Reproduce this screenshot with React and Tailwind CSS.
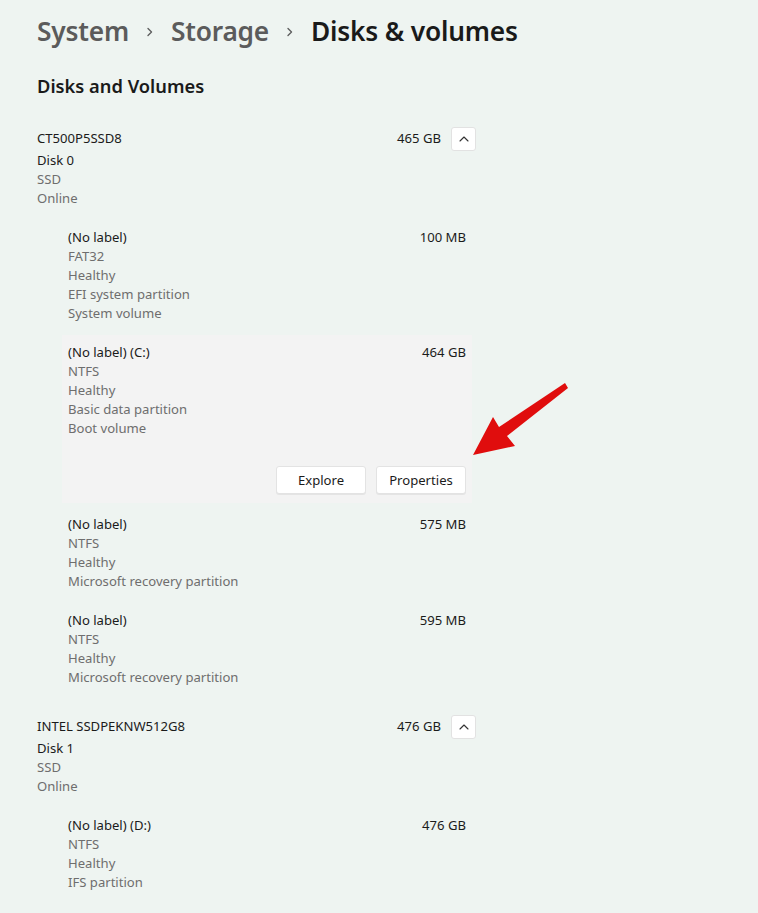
import React from "react";

const disks = [
  {
    name: "CT500P5SSD8",
    size: "465 GB",
    index: "Disk 0",
    type: "SSD",
    status: "Online",
    volumes: [
      { label: "(No label)", size: "100 MB", lines: ["FAT32", "Healthy", "EFI system partition", "System volume"] },
      { label: "(No label) (C:)", size: "464 GB", lines: ["NTFS", "Healthy", "Basic data partition", "Boot volume"], selected: true },
      { label: "(No label)", size: "575 MB", lines: ["NTFS", "Healthy", "Microsoft recovery partition"] },
      { label: "(No label)", size: "595 MB", lines: ["NTFS", "Healthy", "Microsoft recovery partition"] },
    ],
  },
  {
    name: "INTEL SSDPEKNW512G8",
    size: "476 GB",
    index: "Disk 1",
    type: "SSD",
    status: "Online",
    volumes: [
      { label: "(No label) (D:)", size: "476 GB", lines: ["NTFS", "Healthy", "IFS partition"] },
    ],
  },
];

const Chevron = () => (
  <svg width="8" height="12" viewBox="0 0 8 12" className="mx-[17px] mt-[2px]">
    <path d="M2 2.5 L5.5 6 L2 9.5" fill="none" stroke="#5f5f5f" strokeWidth="1.4" strokeLinecap="round" strokeLinejoin="round" />
  </svg>
);

const Volume = ({ v }) => {
  if (v.selected) {
    return (
      <div className="mt-[12px] bg-[#f3f3f3] px-[6px] pt-[8px] pb-[9px]">
        <div className="flex justify-between text-[#1b1b1b]">
          <span>{v.label}</span>
          <span>{v.size}</span>
        </div>
        {v.lines.map((l) => (
          <div key={l} className="text-[#6e6e6e]">{l}</div>
        ))}
        <div className="mt-[28px] flex justify-end gap-[10px]">
          <button className="h-[28px] w-[90px] rounded-[3px] border border-[#e3e3e3] bg-white text-[#1b1b1b] shadow-[0_1px_0_rgba(0,0,0,0.06)]">
            Explore
          </button>
          <button className="h-[28px] w-[90px] rounded-[3px] border border-[#e3e3e3] bg-white text-[#1b1b1b] shadow-[0_1px_0_rgba(0,0,0,0.06)]">
            Properties
          </button>
        </div>
      </div>
    );
  }
  return (
    <div className="px-[6px] pt-[12px] first:pt-0 [&+&]:pt-[20px]">
      <div className="flex justify-between text-[#1b1b1b]">
        <span>{v.label}</span>
        <span>{v.size}</span>
      </div>
      {v.lines.map((l) => (
        <div key={l} className="text-[#6e6e6e]">{l}</div>
      ))}
    </div>
  );
};

const Disk = ({ d }) => (
  <div>
    <div className="flex w-[439px] items-start">
      <span className="flex-1 leading-[21px] text-[#1b1b1b]">{d.name}</span>
      <span className="leading-[21px] text-[#1b1b1b]">{d.size}</span>
      <button className="ml-[10px] -mt-[1px] flex h-[24px] w-[25px] items-center justify-center rounded-[3px] border border-[#e2e2e2] bg-white">
        <svg width="10" height="6" viewBox="0 0 10 6">
          <path d="M1 5 L5 1 L9 5" fill="none" stroke="#333" strokeWidth="1.1" strokeLinecap="round" strokeLinejoin="round" />
        </svg>
      </button>
    </div>
    <div className="text-[#1b1b1b]">{d.index}</div>
    <div className="text-[#6e6e6e]">{d.type}</div>
    <div className="text-[#6e6e6e]">{d.status}</div>
    <div className="ml-[25px] mt-[20px] flex w-[410px] flex-col">
      {d.volumes.map((v, i) => (
        <Volume key={i} v={v} />
      ))}
    </div>
  </div>
);

export default function App() {
  return (
    <div
      className="relative min-h-[913px] w-[758px] bg-[#eef4f1] pl-[37px] pt-[10px] text-[13.1px] leading-[19px]"
      style={{ fontFamily: '"Noto Sans", "Open Sans", sans-serif' }}
    >
      <div className="flex h-[42px] items-center text-[26.3px] font-semibold tracking-[-0.2px]">
        <span className="text-[#5b5b5b]">System</span>
        <Chevron />
        <span className="text-[#5b5b5b]">Storage</span>
        <Chevron />
        <span className="text-[#1a1a1a]">Disks &amp; volumes</span>
      </div>
      <h2 className="mt-[21px] text-[18.3px] font-semibold leading-[26px] text-[#1a1a1a]">Disks and Volumes</h2>
      <div className="mt-[29px] flex flex-col gap-[29px]">
        {disks.map((d) => (
          <Disk key={d.name} d={d} />
        ))}
      </div>

      {/* red pointer arrow */}
      <svg className="pointer-events-none absolute left-0 top-0" width="758" height="913">
        <polygon
          points="473,455 493,417 499,427 565,383 568,388 507,436 515,446"
          fill="#e00d0d"
        />
      </svg>
    </div>
  );
}
